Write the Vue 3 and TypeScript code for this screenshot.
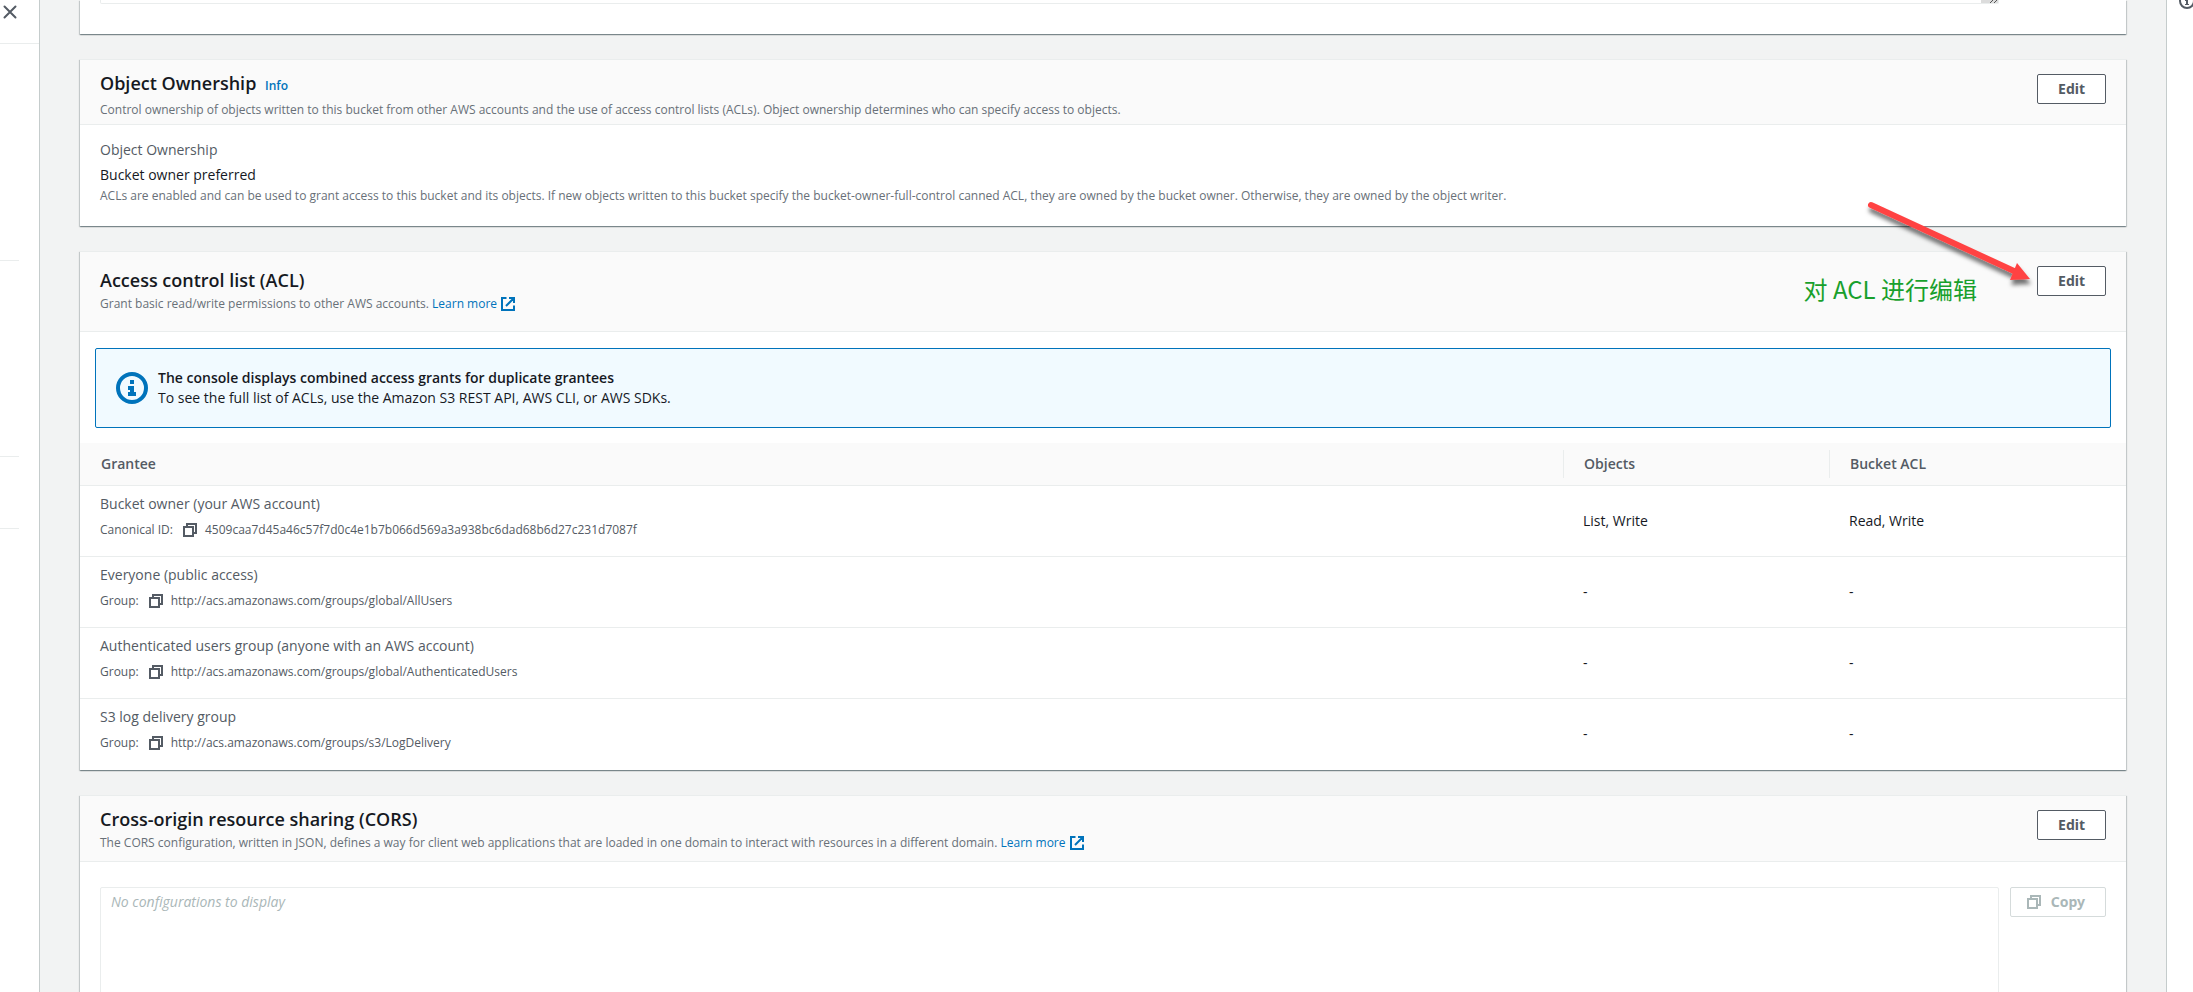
<script setup lang="ts">
interface Grant {
  grantee: string
  idLabel: string
  id: string
  objects: string
  bucketAcl: string
}

const grants: Grant[] = [
  {
    grantee: 'Bucket owner (your AWS account)',
    idLabel: 'Canonical ID:',
    id: '4509caa7d45a46c57f7d0c4e1b7b066d569a3a938bc6dad68b6d27c231d7087f',
    objects: 'List, Write',
    bucketAcl: 'Read, Write',
  },
  {
    grantee: 'Everyone (public access)',
    idLabel: 'Group:',
    id: 'http://acs.amazonaws.com/groups/global/AllUsers',
    objects: '-',
    bucketAcl: '-',
  },
  {
    grantee: 'Authenticated users group (anyone with an AWS account)',
    idLabel: 'Group:',
    id: 'http://acs.amazonaws.com/groups/global/AuthenticatedUsers',
    objects: '-',
    bucketAcl: '-',
  },
  {
    grantee: 'S3 log delivery group',
    idLabel: 'Group:',
    id: 'http://acs.amazonaws.com/groups/s3/LogDelivery',
    objects: '-',
    bucketAcl: '-',
  },
]
</script>

<template>
  <div class="shell">
    <nav class="side-nav" aria-label="Service navigation">
      <div class="nav-head">
        <button class="icon-button" type="button" aria-label="Close navigation">
          <svg width="14" height="14" viewBox="0 0 14 14" fill="none" stroke="#545b64" stroke-width="2" stroke-linecap="round">
            <path d="M1.5 1.5l11 11M12.5 1.5l-11 11" />
          </svg>
        </button>
      </div>
      <div class="nav-group first"></div>
      <div class="nav-group second"></div>
      <div class="nav-group third"></div>
    </nav>

    <main class="content">
      <section class="card policy">
        <div class="policy-box"><span class="grip"></span></div>
      </section>

      <section class="card">
        <header class="card-head">
          <div>
            <h2>Object Ownership <a class="info" href="#">Info</a></h2>
            <p class="desc">Control ownership of objects written to this bucket from other AWS accounts and the use of access control lists (ACLs). Object ownership determines who can specify access to objects.</p>
          </div>
          <button class="btn" type="button">Edit</button>
        </header>
        <div class="ownership">
          <div class="label">Object Ownership</div>
          <div class="value">Bucket owner preferred</div>
          <p class="hint">ACLs are enabled and can be used to grant access to this bucket and its objects. If new objects written to this bucket specify the bucket-owner-full-control canned ACL, they are owned by the bucket owner. Otherwise, they are owned by the object writer.</p>
        </div>
      </section>

      <section class="card">
        <header class="card-head tall">
          <div>
            <h2>Access control list (ACL)</h2>
            <p class="desc">Grant basic read/write permissions to other AWS accounts.
              <a href="#">Learn more<svg class="external" width="14" height="14" viewBox="0 0 14 14" fill="none" stroke="currentColor" stroke-width="2"><path d="M5.5 1H1v12h12V8.500M8 1h5v5M13 1L5 9" /></svg></a>
            </p>
          </div>
          <button class="btn" type="button">Edit</button>
        </header>

        <div class="alert">
          <svg width="32" height="32" viewBox="0 0 32 32">
            <circle cx="16" cy="16" r="14" fill="none" stroke="#0073bb" stroke-width="4" />
            <path fill="#0073bb" d="M14 8h4v4h-4zM12 14h6v6h2v4h-8v-4h2v-2h-2z" />
          </svg>
          <div>
            <strong>The console displays combined access grants for duplicate grantees</strong>
            <p>To see the full list of ACLs, use the Amazon S3 REST API, AWS CLI, or AWS SDKs.</p>
          </div>
        </div>

        <table>
          <thead>
            <tr>
              <th scope="col">Grantee</th>
              <th scope="col" class="col-objects"><span>Objects</span></th>
              <th scope="col" class="col-bucket"><span>Bucket ACL</span></th>
            </tr>
          </thead>
          <tbody>
            <tr v-for="grant in grants" :key="grant.grantee">
              <td class="who">
                <div class="grantee">{{ grant.grantee }}</div>
                <div class="identity">
                  <span>{{ grant.idLabel }}</span>
                  <button class="icon-button" type="button" aria-label="Copy identifier">
                    <svg width="14" height="14" viewBox="0 0 14 14" fill="none" stroke="#545b64" stroke-width="2"><path d="M1 4h9v9H1zM4 4V1h9v9h-3" /></svg>
                  </button>
                  <span>{{ grant.id }}</span>
                </div>
              </td>
              <td>{{ grant.objects }}</td>
              <td>{{ grant.bucketAcl }}</td>
            </tr>
          </tbody>
        </table>

        <div class="note" lang="zh">对 ACL 进行编辑</div>
        <svg class="arrow" width="180" height="100" viewBox="0 0 180 100">
          <defs>
            <filter id="arrow-shadow" x="-10%" y="-10%" width="120%" height="140%">
              <feDropShadow dx="1" dy="5" stdDeviation="2" flood-color="#000" flood-opacity="0.55" />
            </filter>
          </defs>
          <g filter="url(#arrow-shadow)">
            <path d="M11 10L154 76" stroke="#ff4343" stroke-width="6" stroke-linecap="round" />
            <path d="M157 68L170 84L150 85z" fill="#ff4343" />
          </g>
        </svg>
      </section>

      <section class="card">
        <header class="card-head cors-head">
          <div>
            <h2>Cross-origin resource sharing (CORS)</h2>
            <p class="desc">The CORS configuration, written in JSON, defines a way for client web applications that are loaded in one domain to interact with resources in a different domain.
              <a href="#">Learn more<svg class="external" width="14" height="14" viewBox="0 0 14 14" fill="none" stroke="currentColor" stroke-width="2"><path d="M5.5 1H1v12h12V8.500M8 1h5v5M13 1L5 9" /></svg></a>
            </p>
          </div>
          <button class="btn" type="button">Edit</button>
        </header>
        <div class="cors">
          <textarea readonly aria-label="CORS configuration" placeholder="No configurations to display"></textarea>
          <button class="btn copy" type="button" disabled>
            <svg width="14" height="14" viewBox="0 0 14 14" fill="none" stroke="currentColor" stroke-width="2"><path d="M1 4h9v9H1zM4 4V1h9v9h-3" /></svg>
            Copy
          </button>
        </div>
      </section>
    </main>

    <aside class="help" aria-label="Help panel">
      <button class="icon-button" type="button" aria-label="Open help">
        <svg width="16" height="16" viewBox="0 0 16 16">
          <circle cx="8" cy="8" r="7" fill="none" stroke="#545b64" stroke-width="2" />
          <path fill="#545b64" d="M7 4h2v2H7zM6 7h3v4h1v1H6v-1h1V8H6z" />
        </svg>
      </button>
    </aside>
  </div>
</template>

<style>
body {
  margin: 0;
  overflow: hidden;
}
</style>

<style scoped>
.shell {
  display: flex;
  height: 100vh;
  overflow: hidden;
  background: #f2f3f3;
  color: #16191f;
  font-family: "Open Sans", "Noto Sans", "Noto Sans CJK SC", sans-serif;
  font-size: 14px;
  line-height: 20px;
}
h2,
p {
  margin: 0;
}
a {
  color: #0073bb;
  text-decoration: none;
}
svg {
  display: block;
  flex: none;
}
.icon-button {
  display: block;
  padding: 0;
  border: 0;
  background: none;
}
.side-nav {
  flex: none;
  box-sizing: border-box;
  width: 40px;
  background: #fff;
  border-right: 1px solid #c5cccc;
}
.nav-head {
  box-sizing: border-box;
  height: 44px;
  padding: 5px 3px;
  border-bottom: 1px solid #eaeded;
}
.nav-group {
  box-sizing: border-box;
  width: 19px;
  border-bottom: 1px solid #eaeded;
}
.nav-group.first {
  height: 217px;
}
.nav-group.second {
  height: 196px;
}
.nav-group.third {
  height: 72px;
}
.help {
  flex: none;
  box-sizing: border-box;
  width: 27px;
  padding-left: 12px;
  background: #fff;
  border-left: 1px solid #c5cccc;
}
.help .icon-button {
  margin-top: -7px;
}
.content {
  flex: 1;
  min-width: 0;
  display: flex;
  flex-direction: column;
  gap: 25px;
  padding: 0 40px;
}
.card {
  flex: none;
  position: relative;
  background: #fff;
  border-top: 1px solid #eaeded;
  box-shadow: 0 1px 1px 0 rgba(0, 28, 36, 0.3), 1px 1px 1px 0 rgba(0, 28, 36, 0.15), -1px 1px 1px 0 rgba(0, 28, 36, 0.15);
}
.policy {
  border-top: 0;
  padding: 0 127px 30px 20px;
}
.policy-box {
  display: flex;
  justify-content: flex-end;
  height: 3px;
  border: 1px solid #eaeded;
  border-top: 0;
  border-radius: 0 0 2px 2px;
}
.grip {
  width: 17px;
  background: linear-gradient(135deg, transparent 8px, #555 8px 9px, transparent 9px 11px, #555 11px 12px, transparent 12px) #dcdcdc;
}
.card-head {
  display: flex;
  justify-content: space-between;
  align-items: flex-start;
  box-sizing: border-box;
  height: 65px;
  padding: 12px 20px 0;
  background: #fafafa;
  border-bottom: 1px solid #eaeded;
}
.card-head.tall {
  height: 80px;
}
.card-head.cors-head {
  height: 66px;
}
h2 {
  margin-bottom: 2px;
  font-size: 18px;
  font-weight: 600;
  line-height: 22px;
}
.tall h2 {
  padding-top: 5px;
}
.info {
  margin-left: 4px;
  font-size: 12px;
}
.desc,
.hint {
  color: #687078;
  font-size: 12px;
  line-height: 22px;
}
.external {
  display: inline-block;
  margin-left: 4px;
  vertical-align: -3px;
}
.btn {
  flex: none;
  box-sizing: border-box;
  height: 30px;
  padding: 0 20px;
  border: 1px solid #545b64;
  border-radius: 2px;
  background: #fff;
  color: #545b64;
  font: 700 14px/20px "Noto Sans", sans-serif;
}
.card-head .btn {
  margin-top: 2px;
}
.ownership {
  padding: 15px 20px 19px;
}
.label {
  color: #545b64;
}
.value {
  margin-top: 5px;
}
.alert {
  display: flex;
  align-items: center;
  gap: 10px;
  box-sizing: border-box;
  height: 80px;
  margin: 16px 15px 15px;
  padding: 0 20px;
  background: #f1faff;
  border: 1px solid #0073bb;
  border-radius: 2px;
}
.alert strong {
  font-weight: 600;
}
table {
  width: 100%;
  table-layout: fixed;
  border-collapse: separate;
  border-spacing: 0;
}
th {
  box-sizing: border-box;
  height: 43px;
  padding: 0 0 0 21px;
  background: #fafafa;
  border-bottom: 1px solid #eaeded;
  color: #545b64;
  font-weight: 600;
  text-align: left;
}
th span {
  display: block;
  padding-left: 20px;
  border-left: 1px solid #eaeded;
  line-height: 28px;
}
th.col-objects,
th.col-bucket {
  padding: 0;
}
.col-objects {
  width: 266px;
}
.col-bucket {
  width: 297px;
}
td {
  box-sizing: border-box;
  height: 71px;
  padding: 0 20px;
  border-bottom: 1px solid #eaeded;
}
tbody tr:last-child td {
  border-bottom-color: transparent;
}
td.who {
  padding-top: 8px;
  vertical-align: top;
}
.grantee {
  color: #545b64;
}
.identity {
  display: flex;
  align-items: center;
  margin-top: 6px;
  color: #545b64;
  font-size: 12px;
}
.identity .icon-button {
  margin: 0 8px 0 10px;
}
.note {
  position: absolute;
  top: 21px;
  right: 149px;
  color: #18a02c;
  font-family: "Noto Sans CJK SC", sans-serif;
  font-size: 24px;
  line-height: 32px;
}
.arrow {
  position: absolute;
  top: -57px;
  right: 86px;
}
.cors {
  display: flex;
  align-items: flex-start;
  gap: 11px;
  padding: 25px 20px;
}
textarea {
  flex: 1;
  box-sizing: border-box;
  height: 220px;
  padding: 4px 10px;
  border: 1px solid #eaeded;
  border-radius: 2px;
  background: #fff;
  font: 14px/20px "Open Sans", sans-serif;
  resize: none;
}
textarea::placeholder {
  color: #aab7b8;
  font-style: italic;
  opacity: 1;
}
.btn.copy {
  display: flex;
  align-items: center;
  gap: 10px;
  padding: 0 20px 0 16px;
  border-color: #d5dbdb;
  color: #aab7b8;
}
</style>
